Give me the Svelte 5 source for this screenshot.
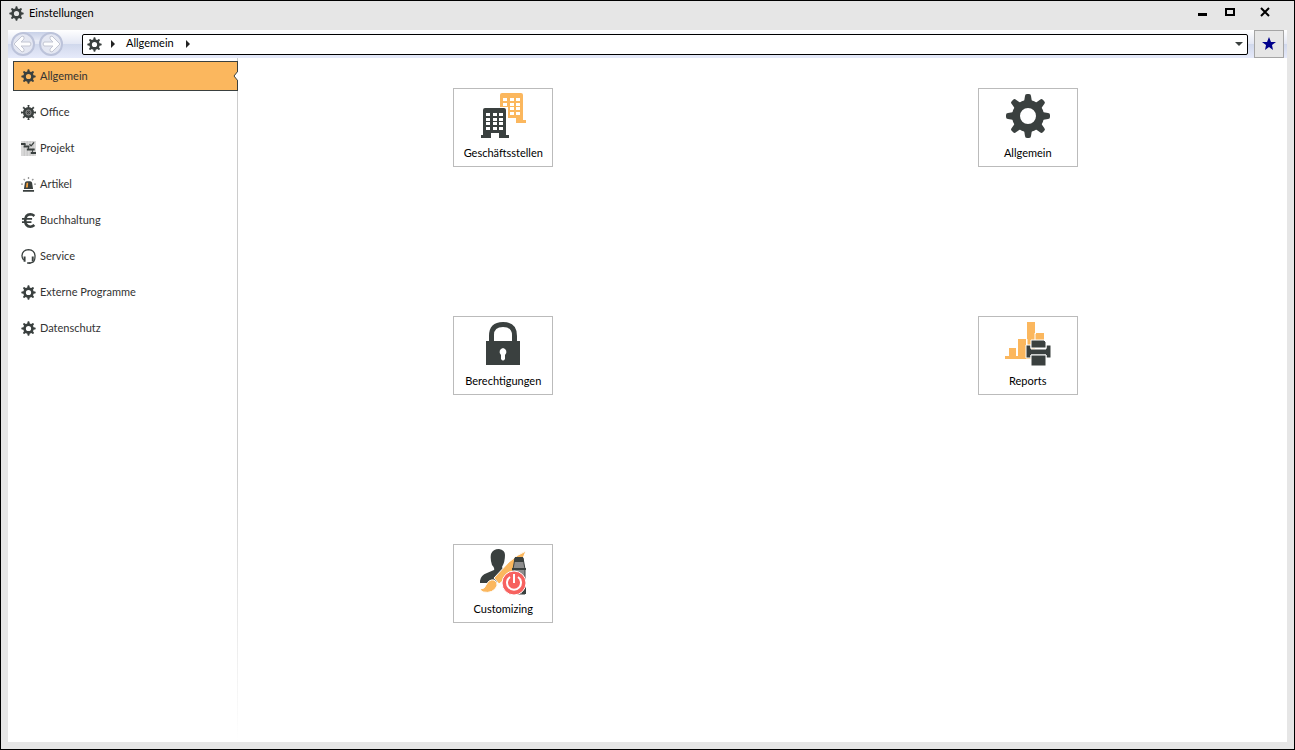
<script lang="ts">

	type Entry = { label: string, icon: string };

	// Sidebar entries:
	const sections: Entry[] = [
		{ label: 'Allgemein', icon: 'gear' },
		{ label: 'Office', icon: 'wheel' },
		{ label: 'Projekt', icon: 'plan' },
		{ label: 'Artikel', icon: 'siren' },
		{ label: 'Buchhaltung', icon: 'euro' },
		{ label: 'Service', icon: 'headset' },
		{ label: 'Externe Programme', icon: 'gear' },
		{ label: 'Datenschutz', icon: 'gear' }
	];

	// Tiles of the selected section:
	const tiles: Entry[] = [
		{ label: 'Geschäftsstellen', icon: 'offices' },
		{ label: 'Allgemein', icon: 'gear' },
		{ label: 'Berechtigungen', icon: 'lock' },
		{ label: 'Reports', icon: 'reports' },
		{ label: 'Customizing', icon: 'customizing' }
	];

	const teeth = [0, 45, 90, 135, 180, 225, 270, 315];
	let selected = $state('Allgemein');

</script>

<!-- #################################################################################################### -->

{#snippet building(color: string)}
	<path fill={color} d="M2 2Q2 0 4 0H23Q25 0 25 2V27H28V30H18V25H10V30H0V27H2Z" />
	{#each [5, 10, 14, 19] as y}
		{#each [5, 12, 18] as x}
			<rect {x} {y} width="4" height="3" fill="#fff" />
		{/each}
	{/each}
{/snippet}

{#snippet icon(name: string)}
	<svg class="icon" viewBox="0 0 46 46" aria-hidden="true">
		{#if name === 'gear'}
			<g fill="#3a403f">
				{#each teeth as angle}
					<path d="M17 11L19 9L20 3Q20 1 22 1H24Q26 1 26 3L27 9L29 11Z" transform="rotate({angle} 23 23)" />
				{/each}
			</g>
			<circle cx="23" cy="23" r="12" fill="none" stroke="#3a403f" stroke-width="8" />
		{:else if name === 'wheel'}
			<g stroke="#3a403f" stroke-width="4">
				{#each teeth as angle}
					<path d="M23 1V10M20 2H26" transform="rotate({angle} 23 23)" />
				{/each}
			</g>
			<circle cx="23" cy="23" r="17" fill="#3a403f" />
			<circle cx="23" cy="23" r="8" fill="#666" stroke="#a5a5a5" stroke-width="2" />
			<path d="M18 18L28 28M28 18L18 28" stroke="#3a403f" stroke-width="3" />
		{:else if name === 'plan'}
			<path fill="#d9d9d9" d="M0 0H46V46H0Z" />
			<path d="M10 0V46M19 0V46M28 0V46M37 0V46" stroke="#bbb" stroke-width="2" />
			<path d="M0 9H14M8 17H26M18 26H42M30 37H46" stroke="#3a403f" stroke-width="6" />
			<path d="M12 9V17M23 17V26M35 26V37" stroke="#3a403f" stroke-width="3" />
			<path d="M26 10L31 15L40 4" fill="none" stroke="#3a403f" stroke-width="4" />
		{:else if name === 'siren'}
			<path fill="#3a403f" d="M6 40H40V45H6ZM9 37L12 18Q13 13 18 13H28Q33 13 34 18L37 37Z" />
			<path fill="#f7a13c" d="M15 32L17 18H22L21 32Z" />
			<path d="M23 0V6M8 6L12 10M38 6L34 10M0 22H6M40 22H46" stroke="#999" stroke-width="4" />
		{:else if name === 'euro'}
			<path d="M41 9Q35 4 29 4Q13 5 13 23Q13 41 29 42Q35 42 41 37" fill="none" stroke="#3a403f" stroke-width="8" />
			<path d="M3 18H34M3 28H32" stroke="#3a403f" stroke-width="6" />
		{:else if name === 'headset'}
			<path d="M8 34Q3 28 3 21Q4 3 23 2Q42 3 43 21Q43 38 37 40L25 44" fill="none" stroke="#3a403f" stroke-width="4" />
			<path d="M11 23V39M36 23V38" stroke="#3a403f" stroke-width="6" />
			<path d="M19 43H29" stroke="#3a403f" stroke-width="5" />
		{:else if name === 'offices'}
			<g transform="translate(18 0)">{@render building('#fbb75e')}</g>
			<path fill="#fff" d="M1 14H28V42H31V46H0V42H1Z" />
			<g transform="translate(1 15)">{@render building('#3a403f')}</g>
		{:else if name === 'lock'}
			<path fill="#3a403f" d="M6 20H9V15Q9 1 23 1Q37 1 37 15V20H40V44H6ZM14 20H32V14Q32 6 23 6Q14 6 14 14Z" />
			<path fill="#fff" d="M23 27A4 4 0 0 1 25 34V38Q23 41 21 38V34A4 4 0 0 1 23 27Z" />
		{:else if name === 'reports'}
			<path fill="#fbb75e" d="M0 35H4V27H11V35H13V18H21V35H22V1H30V13H31V12H39V25H30V38H0Z" />
			<path d="M12 29V35M22 18V35M30 12V24" stroke="#fff" stroke-width="1" />
			<path fill="#3a403f" stroke="#fff" stroke-width="1" d="M21 24H26V28H41V24H46V37H41V34H26V37H21Z" />
			<path fill="#3a403f" stroke="#fff" stroke-width="1" d="M26 19H39L41 21V27H26ZM26 34H41V45H26Z" />
		{:else}
			<path fill="#3a403f" d="M0 35Q-1 27 7 24L14 21Q15 19 12 16Q10 10 11 5Q13 0 19 0Q25 1 25 6Q25 13 22 18Q22 20 25 21L31 23L16 34H0Z" />
			<path fill="#fbb75e" stroke="#fff" stroke-width="1" d="M46 2Q38 5 29 13L14 29L19 35L30 26Q42 14 46 2Z" />
			<path fill="#fbb75e" stroke="#fff" stroke-width="1" d="M0 40Q5 40 6 36Q9 30 14 31Q18 33 17 37Q13 45 3 43Q1 42 0 40Z" />
			<path fill="#8d8d8d" stroke="#3a403f" stroke-width="1" d="M35 9H43L45 20V45H33V20Z" />
			<path fill="#3a403f" d="M35 8H43L44 13H34ZM32 19H46V21H32ZM42 38H46V45H42Z" />
			<circle cx="34" cy="34" r="12" fill="#f7625f" stroke="#fff" stroke-width="1" />
			<path d="M30 28A7 7 0 1 0 38 28M34 25V34" fill="none" stroke="#fff" stroke-width="2" />
		{/if}
	</svg>
{/snippet}

{#snippet historyArrow()}
	<svg viewBox="0 0 24 24" aria-hidden="true">
		<circle cx="12" cy="12" r="11" fill="#e4e7f2" stroke="#bcc3da" stroke-width="2" />
		<path fill="#fdfdfe" stroke="#c3c6d2" stroke-width="1" d="M3 12L11 4Q14 4 13 7L10 10H19Q21 12 19 14H10L13 17Q14 20 11 20Z" />
	</svg>
{/snippet}

<div class="window">
	<header class="titleBar">
		{@render icon('gear')}
		<h1>Einstellungen</h1>
		<div class="windowButtons">
			<button aria-label="Minimieren"><svg viewBox="0 0 16 12"><path d="M7 7H16V10H7Z" /></svg></button>
			<button aria-label="Maximieren"><svg viewBox="0 0 16 12"><path d="M2 3H10V9H2Z" fill="none" stroke="#000" stroke-width="2" /></svg></button>
			<button aria-label="Schließen"><svg viewBox="0 0 16 12"><path d="M4 2L12 10M12 2L4 10" stroke="#000" stroke-width="2" /></svg></button>
		</div>
	</header>

	<div class="client">
		<div class="toolBar">
			<div class="history">
				<button aria-label="Zurück">{@render historyArrow()}</button>
				<button class="forward" aria-label="Vorwärts">{@render historyArrow()}</button>
			</div>
			<nav class="addressBar" aria-label="Pfad">
				{@render icon('gear')}
				<span class="arrow"></span>
				<button class="crumb">{selected}</button>
				<span class="arrow"></span>
				<button class="dropDown" aria-label="Verlauf"></button>
			</nav>
			<button class="favorite" aria-label="Favorit">
				<svg viewBox="0 0 14 14"><path d="M7 0L9 5H14L10 8L11 13L7 10L3 13L4 8L0 5H5Z" fill="#00008b" /></svg>
			</button>
		</div>

		<div class="content">
			<nav class="sideBar" aria-label="Bereiche">
				{#each sections as section}
					<button class="section" class:active={section.label === selected} onclick={() => selected = section.label}>
						{@render icon(section.icon)}
						<span>{section.label}</span>
						{#if section.label === selected}
							<svg class="notch" viewBox="0 0 5 10" aria-hidden="true"><path d="M5 0L1 5L5 10" fill="#fff" stroke="#3a403f" /></svg>
						{/if}
					</button>
				{/each}
			</nav>
			<main class="tiles">
				{#each tiles as tile}
					<button class="tile">
						{@render icon(tile.icon)}
						<span>{tile.label}</span>
					</button>
				{/each}
			</main>
		</div>
	</div>
</div>

<!-- #################################################################################################### -->

<style>

	:global(body) {
		margin: 0;
	}

	.window {
		display: flex;
		flex-direction: column;
		box-sizing: border-box;
		min-height: 100vh;
		padding: 0 7px 7px;
		font: 11px/16px Lato, "Liberation Sans", sans-serif;
		color: #000;
		background: #e6e6e6;
		border: 1px solid #000;
	}

	button {
		display: flex;
		align-items: center;
		padding: 0;
		font: inherit;
		color: inherit;
		background: none;
		border: none;
	}

	svg {
		display: block;
	}

	.icon {
		flex: none;
		width: 15px;
		height: 15px;
	}

	.titleBar {
		display: flex;
		align-items: center;
		height: 29px;
		gap: 5px;
		padding: 0 14px 4px 1px;
		box-sizing: border-box;
	}

	h1 {
		margin: 0 auto 2px 0;
		font: inherit;
	}

	.windowButtons {
		display: flex;
		gap: 17px;
		margin-bottom: 4px;
	}

	.windowButtons svg {
		width: 16px;
		height: 12px;
	}

	.client {
		display: flex;
		flex: 1;
		flex-direction: column;
		background: #fff;
	}

	.toolBar {
		display: flex;
		align-items: center;
		height: 28px;
		background: linear-gradient(#fff, #e3e7f4 50%, #d0d8ec 50%, #e6eafa);
	}

	.history {
		display: flex;
		gap: 4px;
		margin: 0 19px 0 3px;
		background: linear-gradient(#c8d1e8, #e3e7f4) top / 28px 8px no-repeat;
	}

	.history svg {
		width: 24px;
		height: 24px;
	}

	.forward {
		transform: scaleX(-1);
	}

	.addressBar {
		display: flex;
		flex: 1;
		align-items: center;
		box-sizing: border-box;
		height: 21px;
		padding: 0 4px;
		background: #fff;
		border: 1px solid #000;
		border-radius: 2px;
	}

	.arrow {
		margin: 0 11px 0 9px;
		border: 4px solid transparent;
		border-right: none;
		border-left-color: #222;
	}

	.crumb {
		padding: 0 3px 2px 0;
	}

	.dropDown {
		margin-left: auto;
		border: 4px solid transparent;
		border-top-color: #3a403f;
		border-bottom: none;
	}

	.favorite {
		justify-content: center;
		box-sizing: border-box;
		width: 30px;
		height: 28px;
		margin: 0 3px 0 6px;
		background: #e6e6e6;
		border: 1px solid #a5a5a5;
	}

	.favorite svg {
		width: 14px;
		height: 14px;
	}

	.content {
		display: flex;
		flex: 1;
	}

	.sideBar {
		display: flex;
		flex-direction: column;
		box-sizing: border-box;
		width: 230px;
		gap: 6px;
		padding: 3px 0 0 5px;
		background: linear-gradient(#ccc 60%, #fff) right / 1px 100% no-repeat;
	}

	.section {
		position: relative;
		box-sizing: border-box;
		height: 30px;
		gap: 4px;
		padding-left: 7px;
		color: #333;
		border: 1px solid transparent;
	}

	.section.active {
		background: #fbb75e;
		border-color: #3a403f;
	}

	.notch {
		position: absolute;
		right: -1px;
		width: 5px;
		height: 10px;
	}

	.tiles {
		display: grid;
		flex: 1;
		grid-template-columns: 1fr 1fr;
		grid-auto-rows: 1fr;
		justify-items: center;
	}

	.tile {
		flex-direction: column;
		box-sizing: border-box;
		width: 100px;
		height: 79px;
		gap: 6px;
		margin: 30px 0 0 6px;
		padding-top: 4px;
		background: #fff;
		border: 1px solid #bbb;
	}

	.tile > :global(.icon) {
		width: 46px;
		height: 46px;
	}

</style>
